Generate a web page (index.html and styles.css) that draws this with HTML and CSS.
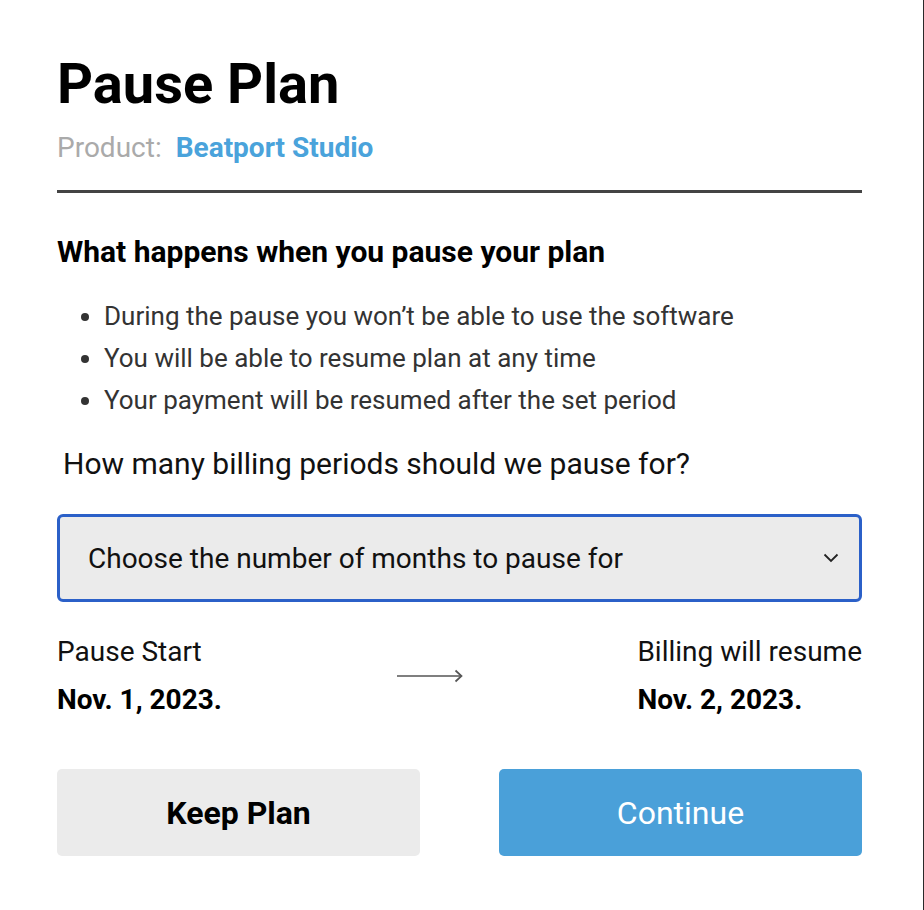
FILE: index.html
```html
<!DOCTYPE html>
<html lang="en">
<head>
<meta charset="utf-8">
<title>Pause Plan</title>
<link rel="stylesheet" href="styles.css">
</head>
<body>
<div class="frame">
  <main class="dialog">
    <h1 class="title">Pause Plan</h1>
    <p class="product"><span class="product-label">Product:</span><span class="product-name">Beatport Studio</span></p>
    <hr class="divider">
    <h2 class="subhead">What happens when you pause your plan</h2>
    <ul class="points">
      <li>During the pause you won’t be able to use the software</li>
      <li>You will be able to resume plan at any time</li>
      <li>Your payment will be resumed after the set period</li>
    </ul>
    <p class="question">How many billing periods should we pause for?</p>
    <div class="select">
      <span class="select-text">Choose the number of months to pause for</span>
      <svg class="chevron" width="16" height="10" viewBox="0 0 16 10"><polyline points="1.5,1.5 8,8 14.5,1.5" fill="none" stroke="#222" stroke-width="1.8"/></svg>
    </div>
    <div class="dates">
      <div class="date-col">
        <div class="date-label">Pause Start</div>
        <div class="date-value">Nov. 1, 2023.</div>
      </div>
      <svg class="arrow" width="66" height="14" viewBox="0 0 66 14"><line x1="0" y1="7" x2="64" y2="7" stroke="#555" stroke-width="1.7"/><polyline points="58.5,1.5 64.5,7 58.5,12.5" fill="none" stroke="#555" stroke-width="1.7"/></svg>
      <div class="date-col">
        <div class="date-label">Billing will resume</div>
        <div class="date-value">Nov. 2, 2023.</div>
      </div>
    </div>
    <div class="actions">
      <button class="btn btn-keep">Keep Plan</button>
      <button class="btn btn-continue">Continue</button>
    </div>
  </main>
</div>
</body>
</html>
```

FILE: styles.css
```css
* { box-sizing: border-box; }
html, body { margin: 0; padding: 0; background: #fff; }
body { font-family: Roboto, "Liberation Sans", sans-serif; color: #111; }

.frame {
  width: 924px;
  min-height: 910px;
  border-right: 1px solid #2a2a2a;
}

.dialog {
  width: 923px;
  padding: 54px 61px 0 57px;
}

.title {
  margin: 0;
  font-size: 56px;
  line-height: 60px;
  font-weight: 700;
  color: #000;
}

.product {
  margin: 18px 0 0;
  font-size: 28px;
  line-height: 32px;
  display: flex;
  gap: 14px;
}
.product-label { color: #aaa; }
.product-name { color: #4aa3db; font-weight: 700; }

.divider {
  margin: 26px 0 0;
  border: 0;
  height: 3px;
  background: #444;
}

.subhead {
  margin: 42px 0 0;
  font-size: 30px;
  line-height: 34px;
  font-weight: 700;
  color: #000;
}

.points {
  margin: 26px 0 0;
  padding: 0 0 0 47px;
  font-size: 26px;
  line-height: 42px;
  color: #333;
}

.question {
  margin: 25px 0 0 6px;
  font-size: 30px;
  line-height: 36px;
  color: #111;
}

.select {
  margin-top: 32px;
  height: 88px;
  border: 3px solid #2b60c8;
  border-radius: 6px;
  background: #ebebeb;
  display: flex;
  align-items: center;
  justify-content: space-between;
  padding: 0 20px 0 28px;
}
.select-text { font-size: 28px; color: #111; }
.chevron { display: block; }

.dates {
  margin-top: 32px;
  display: flex;
  justify-content: space-between;
  align-items: center;
}
.date-label { font-size: 28px; line-height: 36px; color: #111; }
.date-value { font-size: 28px; line-height: 36px; font-weight: 700; color: #000; margin-top: 12px; }
.arrow { display: block; }

.actions {
  margin-top: 51px;
  display: flex;
  justify-content: space-between;
}
.btn {
  width: 363px;
  height: 87px;
  border: 0;
  border-radius: 5px;
  font-family: Roboto, "Liberation Sans", sans-serif;
  font-size: 32px;
  cursor: pointer;
}
.btn-keep { background: #ebebeb; color: #000; font-weight: 700; }
.btn-continue { background: #4aa0d9; color: #fff; font-weight: 400; }
```
